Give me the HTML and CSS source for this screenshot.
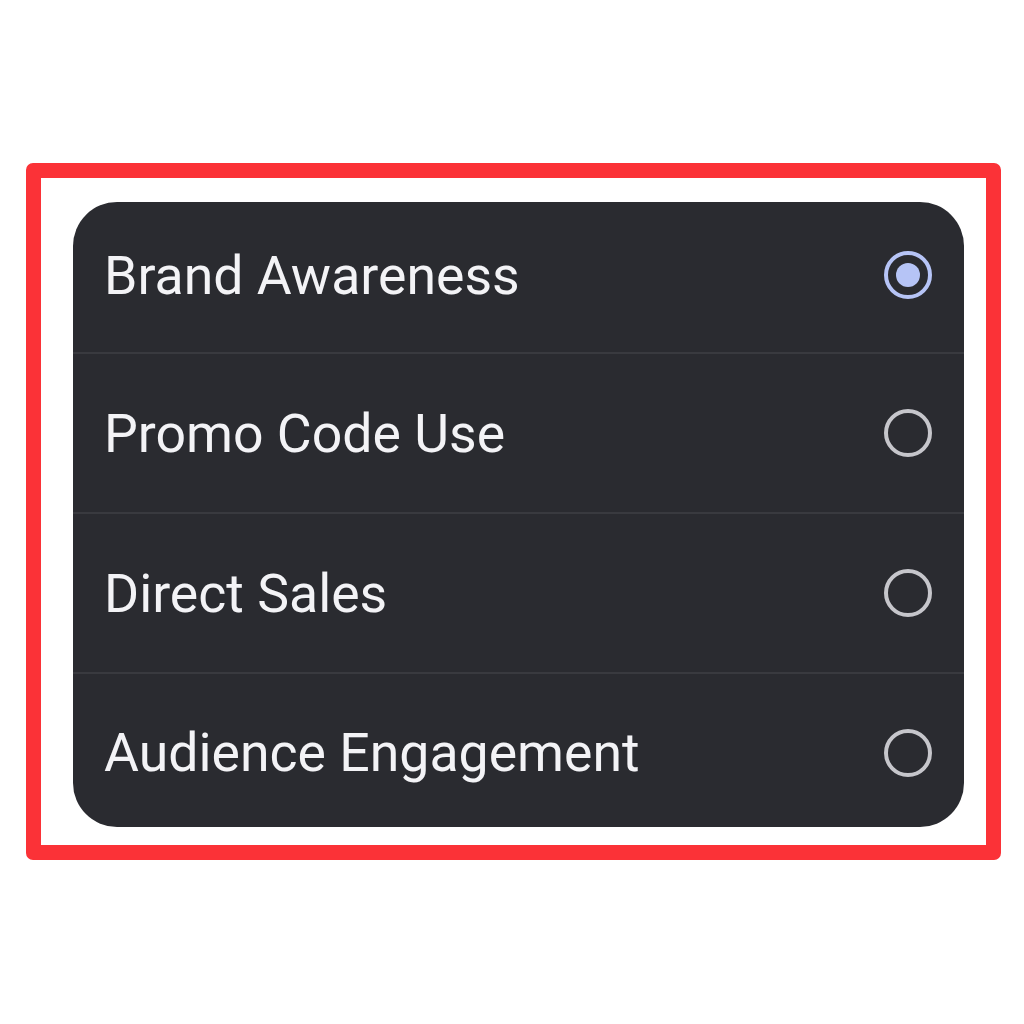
FILE: index.html
```html
<!DOCTYPE html>
<html>
<head>
<meta charset="utf-8">
<link rel="stylesheet" href="styles.css">
</head>
<body>
<div class="frame">
  <div class="card">
    <div class="row row-first">
      <span class="label">Brand Awareness</span>
      <span class="radio radio-on"><span class="dot"></span></span>
    </div>
    <div class="row">
      <span class="label">Promo Code Use</span>
      <span class="radio"></span>
    </div>
    <div class="row">
      <span class="label">Direct Sales</span>
      <span class="radio"></span>
    </div>
    <div class="row row-last">
      <span class="label">Audience Engagement</span>
      <span class="radio"></span>
    </div>
  </div>
</div>
</body>
</html>
```

FILE: styles.css
```css
html, body {
  margin: 0;
  padding: 0;
  background: #ffffff;
}
body {
  width: 1024px;
  height: 1024px;
  padding-top: 163px;
  padding-left: 26px;
  box-sizing: border-box;
  font-family: Roboto, "Liberation Sans", sans-serif;
}
.frame {
  width: 975px;
  height: 697px;
  box-sizing: border-box;
  border: 15px solid #fb3237;
  border-radius: 7px;
  padding: 24px 22px 0 32px;
}
.card {
  width: 891px;
  height: 625px;
  background: #2a2b30;
  border-radius: 44px;
  overflow: hidden;
  display: flex;
  flex-direction: column;
}
.row {
  height: 160px;
  flex: none;
  display: flex;
  align-items: center;
  justify-content: space-between;
  padding: 0 32px 0 31px;
  border-bottom: 2px solid #393a3f;
  box-sizing: border-box;
}
.row-first {
  height: 152px;
  padding-bottom: 4px;
}
.row-last {
  border-bottom: none;
  flex: 1;
  padding-top: 4px;
}
.label {
  color: #f3f3f6;
  font-size: 53.6px;
  font-weight: 400;
}
.radio {
  width: 48px;
  height: 48px;
  box-sizing: border-box;
  border: 4px solid #c6c6cb;
  border-radius: 50%;
  display: flex;
  align-items: center;
  justify-content: center;
}
.radio-on {
  border-color: #b6c4f6;
}
.dot {
  width: 24px;
  height: 24px;
  border-radius: 50%;
  background: #b6c4f6;
}
```
